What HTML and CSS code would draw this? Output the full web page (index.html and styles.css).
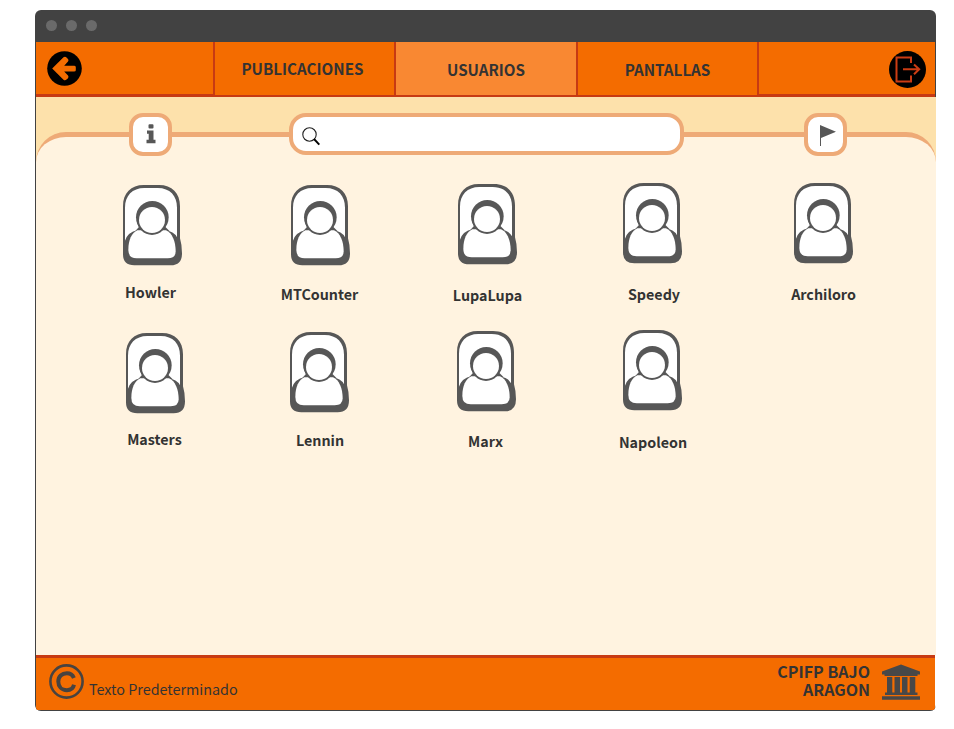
FILE: index.html
```html
<!DOCTYPE html>
<html lang="es">
<head>
<meta charset="utf-8">
<title>Usuarios</title>
<link rel="stylesheet" href="styles.css">
</head>
<body>
<svg class="defs" aria-hidden="true">
  <symbol id="avatar" viewBox="0 0 177 243">
    <path fill="#575757" d="M0 64C0 24 24 0 62 0H108C147 0 171 24 171 64V160Q177 180 177 205Q177 241 143 241H34Q0 241 0 208Z"/>
    <path fill="#fff" d="M6 68C6 32 28 9 64 9H104C141 9 162 32 162 68V157Q153 139 125 136H43Q15 141 6 167Z"/>
    <circle cx="88" cy="97" r="49" fill="#575757"/>
    <path fill="#575757" d="M50 124L36 139H140L125 124Z"/>
    <path fill="#fff" d="M43 136H129C148 144 158 170 158 199Q158 220 134 220H41Q16 220 16 195C16 165 26 144 43 136Z"/>
    <circle cx="87" cy="105" r="45" fill="#575757"/>
    <circle cx="87" cy="105" r="39" fill="#fff"/>
  </symbol>
</svg>
<div class="window">
  <div class="titlebar"><i></i><i></i><i></i></div>
  <header class="nav">
    <div class="side back">
      <svg width="35" height="35" viewBox="0 0 35 35"><circle cx="17.500" cy="17.500" r="17.300"/><path fill="#f46c00" d="M5.200 17.500L16.500 6.300Q18 5 19.500 6.500L21 8Q22 9.300 21 10.500L17.200 14.800H27Q28.800 14.800 28.800 16.200V19.200Q28.800 20.500 27 20.500H17.200L21 24.600Q22 26 21 27.200L19.500 28.600Q18 30 16.500 28.700Z"/></svg>
    </div>
    <a class="tab tab-first">PUBLICACIONES</a>
    <a class="tab active">USUARIOS</a>
    <a class="tab">PANTALLAS</a>
    <div class="side exit">
      <svg width="37" height="37" viewBox="0 0 37 37"><circle cx="18.500" cy="18.500" r="18.500"/><g fill="none" stroke="#cc3c13" stroke-width="2"><path d="M22 12V6.500H7.500V30.500H22V24.500M14 18.300H30M25 13.500L30.200 18.300L25 23.300"/></g></svg>
    </div>
  </header>
  <main class="content">
    <div class="tools">
      <button class="tool" aria-label="Información"><svg width="12" height="22" viewBox="0 0 12 22"><path fill="#575757" d="M3.500 1.300Q3.500 .3 4.500 .3H7.500Q8.500 .3 8.500 1.300V3.500Q8.500 4.500 7.500 4.500H4.500Q3.500 4.500 3.500 3.500ZM2 6.500H8.500V15.700H10.500V19.300H1.500V15.700H3.700V9.800H2Z"/></svg></button>
      <div class="search"><svg width="19" height="19" viewBox="0 0 19 19"><circle cx="7.500" cy="7.500" r="6.700" fill="none" stroke="#222" stroke-width="1.100"/><path d="M12 12L17.300 17.600" stroke="#000" stroke-width="1.900"/></svg></div>
      <button class="tool" aria-label="Marcar"><svg width="18" height="23" viewBox="0 0 18 23"><path fill="#575757" d="M3 2L19 8.700L4 15V23H3Z"/></svg></button>
    </div>
    <section class="panel">
      <div class="users">
        <figure class="user howler"><svg><use href="#avatar"/></svg><figcaption>Howler</figcaption></figure>
        <figure class="user mtcounter"><svg><use href="#avatar"/></svg><figcaption>MTCounter</figcaption></figure>
        <figure class="user lupalupa"><svg><use href="#avatar"/></svg><figcaption>LupaLupa</figcaption></figure>
        <figure class="user speedy"><svg><use href="#avatar"/></svg><figcaption>Speedy</figcaption></figure>
        <figure class="user archiloro"><svg><use href="#avatar"/></svg><figcaption>Archiloro</figcaption></figure>
        <figure class="user masters"><svg><use href="#avatar"/></svg><figcaption>Masters</figcaption></figure>
        <figure class="user lennin"><svg><use href="#avatar"/></svg><figcaption>Lennin</figcaption></figure>
        <figure class="user marx"><svg><use href="#avatar"/></svg><figcaption>Marx</figcaption></figure>
        <figure class="user napoleon"><svg><use href="#avatar"/></svg><figcaption>Napoleon</figcaption></figure>
      </div>
    </section>
  </main>
  <footer class="footer">
    <div class="copy">
      <svg width="35" height="35" viewBox="0 0 35 35" fill="none" stroke="#484340"><circle cx="17.500" cy="17.500" r="16.100" stroke-width="2.600"/><path stroke-width="4" d="M24.900 14C23.600 10.900 21.300 9.300 17.900 9.300C12.800 9.300 9.300 12.600 9.300 17.500S12.600 26.200 17.900 26.200C21.500 26.200 24.200 24.400 25 20.800"/></svg>
      <span>Texto Predeterminado</span>
    </div>
    <div class="school">
      <strong>CPIFP BAJO<br>ARAGON</strong>
      <svg width="38" height="36" viewBox="0 0 38 36" fill="#484848"><path d="M19 .5L38 7.500V10.500H35.500V12H2.500V10.500H0V7.500ZM5 13H10.300V28.500H12.500V13H18V28.500H20V13H25.500V28.500H27.700V13H33.300V28.500H35.500V31H3V28.500H5ZM0 32.200H38V35.700H0Z"/></svg>
    </div>
  </footer>
</div>
</body>
</html>
```

FILE: styles.css
```css
* { box-sizing: border-box; }
body {
  margin: 0;
  background: #fff;
  color: #333;
  font: 15px/20px "Noto Sans CJK SC", "Noto Sans", sans-serif;
}
svg { display: block; flex: none; }
.defs { width: 0; height: 0; position: absolute; }
.window {
  width: 901px;
  height: 701px;
  margin: 10px 0 0 35px;
  display: flex;
  flex-direction: column;
  background: #424242;
  border-radius: 6px;
  overflow: hidden;
}
.titlebar {
  height: 32px;
  flex: none;
  display: flex;
  gap: 9px;
  padding: 10px 0 0 11px;
}
.titlebar i { width: 11px; height: 11px; border-radius: 50%; background: #6a6a6a; }
.nav {
  height: 55px;
  flex: none;
  display: grid;
  grid-template-columns: 177px 181px 182px 181px 178px;
  margin: 0 1px;
  background: #f46c00;
}
.side { border-bottom: 3px solid #c73a13; }
.back { padding: 9px 0 0 11px; }
.exit { border-left: 2px solid #c73a13; padding: 9px 0 0 130px; }
.tab {
  display: flex;
  justify-content: center;
  align-items: center;
  border-left: 2px solid #c73a13;
  border-bottom: 2px solid #c73a13;
  font-weight: 700;
  font-size: 15.2px;
  padding-top: 1px;
}
.tab-first { padding: 0 4px 1px 0; }
.tab.active { background: #f98832; }
.content {
  flex: 1;
  display: flex;
  flex-direction: column;
  margin-left: 1px;
  background: #fde1ab;
}
.tools {
  height: 43px;
  margin: 16px 89px -24px 93px;
  display: flex;
  justify-content: space-between;
  align-items: flex-start;
  z-index: 1;
}
.tool {
  width: 43px;
  height: 43px;
  padding: 0;
  border: 4px solid #eeaa77;
  border-radius: 14px;
  background: #fff;
  display: flex;
  justify-content: center;
  align-items: center;
}
.tool svg { overflow: visible; }
.search {
  width: 395px;
  height: 42px;
  border: 4px solid #eeaa77;
  border-radius: 17px;
  background: #fff;
  padding: 10px 0 0 9px;
  margin-right: 3px;
}
.panel {
  flex: 1;
  border-top: 5px solid #eeaa77;
  border-radius: 30px 30px 0 0;
  background: #fff3e0;
}
.users {
  display: grid;
  grid-template-columns: 167px 169px 165px 165px 177px;
  grid-template-rows: 147px 147px;
  padding: 46px 0 0 33px;
}
.user {
  margin: 0;
  display: flex;
  flex-direction: column;
  align-items: center;
  font-weight: 700;
  font-size: 14.3px;
}
.user svg { width: 59px; height: 81px; }
.user figcaption { margin-top: 20px; }
.howler, .mtcounter { padding-top: 2px; }
.howler figcaption { margin: 16px 4px 0 0; }
.mtcounter figcaption { margin: 18px 2px 0 0; }
.lupalupa { padding-top: 1px; }
.speedy figcaption { margin: 20px 0 0 3px; }
.masters { padding: 3px 0 0 6px; }
.masters figcaption { margin: 15px 2px 0 0; }
.lennin { padding: 2px 2px 0 0; }
.lennin figcaption { margin: 17px 0 0 1px; }
.marx { padding: 1px 2px 0 0; }
.marx figcaption { margin: 19px 2px 0 0; }
.napoleon figcaption { margin: 21px 0 0 1px; }
.footer {
  height: 56px;
  flex: none;
  margin: 0 1px;
  display: flex;
  justify-content: space-between;
  background: linear-gradient(#f46c00, #f46c00) 0 0 / 100% 52px no-repeat;
  border-top: 3px solid #c73a13;
  box-shadow: 1px 0 #fff;
  clip-path: inset(0 -1px 0 0);
}
.footer { background-color: #424242; }
.copy { display: flex; gap: 5px; padding: 6px 0 0 13px; }
.copy span { margin-top: 15px; font-size: 14.35px; }
.school {
  display: flex;
  gap: 12px;
  padding: 6px 15px 0 0;
  text-align: right;
}
.school strong { font-size: 16px; line-height: 18px; margin-top: -2px; }
```
